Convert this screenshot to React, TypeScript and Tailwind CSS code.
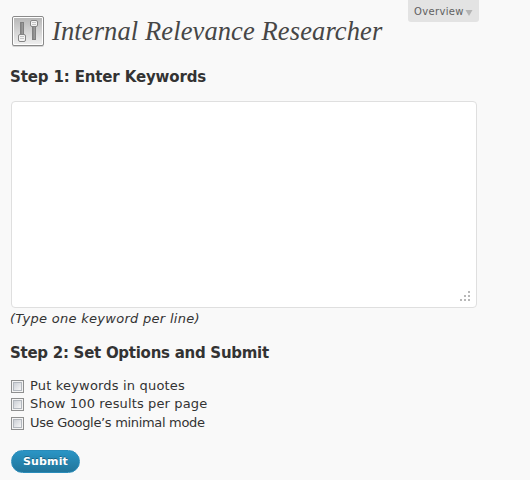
import React from "react";

function ToolsIcon() {
  return (
    <svg width="34" height="34" viewBox="0 0 34 34" className="block shrink-0">
      <defs>
        <linearGradient id="plate" x1="0" y1="0" x2="0" y2="1">
          <stop offset="0" stopColor="#b8b8b8" />
          <stop offset="1" stopColor="#eeeeee" />
        </linearGradient>
        <linearGradient id="track" x1="0" y1="0" x2="1" y2="0">
          <stop offset="0" stopColor="#808080" />
          <stop offset="1" stopColor="#a5a5a5" />
        </linearGradient>
      </defs>
      <rect x="1" y="3" width="32" height="30" rx="2" fill="#d4d4d4" />
      <rect x="1.5" y="2.5" width="31" height="29" rx="1.5" fill="#fff" stroke="#8a8a8a" />
      <rect x="3" y="4" width="28" height="26" fill="url(#plate)" />
      <rect x="9.5" y="8.5" width="3" height="13" fill="url(#track)" stroke="#808080" />
      <rect x="21.5" y="12.5" width="3" height="13" fill="url(#track)" stroke="#808080" />
      <rect x="7.5" y="20.5" width="7" height="7" rx="1.5" fill="#f3f3f3" stroke="#858585" />
      <path d="M9 22.5h4M9 24.5h4" stroke="#c4c4c4" />
      <rect x="19.5" y="6.5" width="7" height="6" rx="1.5" fill="#f3f3f3" stroke="#858585" />
      <path d="M21 8.5h4M21 10.5h4" stroke="#c4c4c4" />
    </svg>
  );
}

function Option({ label, spacing }: { label: string; spacing: string }) {
  return (
    <label className="flex items-start">
      <span className="mt-[3px] mr-[6px] flex size-[13px] items-center justify-center border border-[#8e8f8f] bg-[#f4f4f4]">
        <span className="size-[9px] border border-[#b2b7bd] bg-linear-to-br from-[#cbcfd5] to-[#f6f6f6]" />
      </span>
      <span className={spacing}>{label}</span>
    </label>
  );
}

export default function App() {
  return (
    <div className="relative h-[480px] w-[530px] overflow-hidden bg-[#f9f9f9] pl-[11px] font-['DejaVu_Sans',Verdana,sans-serif] text-[13px] leading-[18px] whitespace-nowrap text-[#333]">
      <div className="absolute top-0 left-[408px] flex h-[22px] w-[71px] items-start rounded-b-[3px] bg-[#e3e3e3] pt-[3px] pl-[6px] text-[10px] text-[#606060]">
        <span className="tracking-[0.35px]">Overview</span>
        <svg width="8" height="6" viewBox="0 0 8 6" className="mt-[7px] ml-[1px] shrink-0">
          <path d="M0.5 0h7L4 6z" fill="#b4b4b4" />
        </svg>
      </div>
      <header className="flex h-[63px] items-start pt-[14px]">
        <ToolsIcon />
        <h1 className="-mt-px ml-[7px] font-['Liberation_Serif',Georgia,serif] text-[26.5px] leading-[36px] tracking-[0.11px] text-[#464646] italic">
          Internal Relevance Researcher
        </h1>
      </header>
      <h2 className="-ml-px h-[38px] pt-[4px] text-[15px] leading-[20px] font-bold tracking-[-0.14px]">Step 1: Enter Keywords</h2>
      <div className="flex h-[207px] w-[466px] items-end justify-end rounded-[4px] border border-[#dfdfdf] bg-white pr-[6px] pb-[6px]">
        <svg width="10" height="10" viewBox="0 0 10 10" fill="#b8b8b8" shapeRendering="crispEdges">
          <path d="M8 0h2v2h-2zM4 4h2v2h-2zM8 4h2v2h-2zM0 8h2v2h-2zM4 8h2v2h-2zM8 8h2v2h-2z" />
        </svg>
      </div>
      <p className="-ml-px h-[35px] pt-[2px] tracking-[0.29px] italic">(Type one keyword per line)</p>
      <h2 className="-ml-px h-[34px] text-[15px] leading-[20px] font-bold tracking-[-0.27px]">Step 2: Set Options and Submit</h2>
      <div className="grid h-[56px] grid-rows-[18px_19px_19px]">
        <Option label="Put keywords in quotes" spacing="tracking-[0.18px]" />
        <Option label="Show 100 results per page" spacing="tracking-[0.13px]" />
        <Option label="Use Google’s minimal mode" spacing="tracking-[-0.32px]" />
      </div>
      <button className="mt-[17px] block h-[23px] w-[69px] rounded-full border border-[#298cba] bg-linear-to-b from-[#2a95c5] to-[#21759b] text-[11px] leading-[21px] font-bold tracking-[0.15px] text-white [text-shadow:0_-1px_0_rgba(0,0,0,0.3)]">
        Submit
      </button>
    </div>
  );
}
